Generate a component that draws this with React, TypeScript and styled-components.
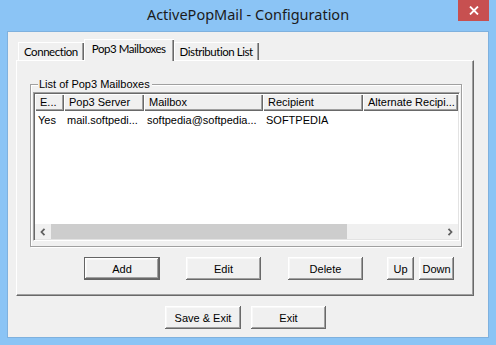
import React from 'react';
import styled, { createGlobalStyle } from 'styled-components';

const Global = createGlobalStyle`
  html, body { margin: 0; padding: 0; background: #8bc4f5; }
  body { width: 496px; height: 345px; overflow: hidden; }
`;

const Frame = styled.div`
  width: 496px;
  height: 345px;
  box-sizing: border-box;
  background: #8bc4f5;
  display: flex;
  flex-direction: column;
`;

const TitleBar = styled.div`
  height: 31px;
  flex: none;
  display: grid;
  grid-template-columns: 1fr auto 1fr;
  align-items: start;
`;

const Title = styled.div`
  grid-column: 2;
  font-family: "Noto Sans", sans-serif;
  font-size: 14.5px;
  line-height: 29px;
  color: #1b1b1b;
  white-space: nowrap;
`;

const CloseBtn = styled.div`
  grid-column: 3;
  justify-self: end;
  margin-right: 7px;
  width: 31px;
  height: 21px;
  background: #c75050;
  display: flex;
  align-items: center;
  justify-content: center;
`;

const Client = styled.div`
  margin: 0 7px;
  height: 307px;
  box-sizing: border-box;
  border: 1px solid #7fb1de;
  background: #f0f0f0;
  padding: 7px 13px 0 8px;
  display: flex;
  flex-direction: column;
  font-family: "Liberation Sans", Arial, sans-serif;
  font-size: 11px;
  color: #000;
`;

const TabStrip = styled.div`
  height: 21px;
  display: flex;
  align-items: flex-end;
  padding-left: 2px;
  position: relative;
  z-index: 1;
`;

const Tab = styled.div<{ $active?: boolean }>`
  flex: none;
  height: ${p => (p.$active ? 22 : 18)}px;
  margin-bottom: ${p => (p.$active ? -1 : 0)}px;
  box-sizing: border-box;
  background: #f0f0f0;
  border-top: 1px solid #fff;
  border-left: 1px solid #fff;
  box-shadow: inset -1px 0 #696969, inset -2px 0 #a0a0a0;
  font-family: Lato, sans-serif;
  font-size: 11.5px;
  letter-spacing: -0.45px;
  line-height: 17px;
  padding: ${p => (p.$active ? '0 8px 0 7px' : '0 6px 0 5px')};
  white-space: nowrap;
  color: #000;
`;

const Panel = styled.div`
  width: 458px;
  height: 236px;
  box-sizing: border-box;
  border-top: 1px solid #fff;
  border-left: 1px solid #fff;
  border-right: 1px solid #696969;
  border-bottom: 1px solid #696969;
  box-shadow: inset -1px -1px #a0a0a0;
  display: flex;
  flex-direction: column;
`;

const Group = styled.div`
  position: relative;
  margin: 23px 0 0 13px;
  width: 432px;
  height: 163px;
  box-sizing: border-box;
  border: 1px solid #a0a0a0;
  box-shadow: inset 1px 1px #fff, 1px 1px #fff;
  padding: 7px 0 0 2px;
`;

const Legend = styled.span`
  position: absolute;
  top: -7px;
  left: 7px;
  padding: 0 2px 0 1px;
  background: #f0f0f0;
  line-height: 13px;
`;

const ListView = styled.div`
  width: 427px;
  height: 149px;
  box-sizing: border-box;
  border-top: 1px solid #a0a0a0;
  border-left: 1px solid #a0a0a0;
  border-right: 1px solid #fff;
  border-bottom: 1px solid #fff;
  box-shadow: inset 1px 1px #696969, inset -1px -1px #e3e3e3;
  padding: 1px;
  background: #fff;
  display: flex;
  flex-direction: column;
  overflow: hidden;
`;

const HeaderRow = styled.div`
  display: flex;
  height: 17px;
  flex: none;
  background: #f0f0f0;
  overflow: hidden;
`;

const HeaderCell = styled.div<{ $w: number }>`
  width: ${p => p.$w}px;
  flex: none;
  box-sizing: border-box;
  padding-left: 5px;
  line-height: 16px;
  white-space: nowrap;
  overflow: hidden;
  box-shadow: inset 1px 1px #fff, inset -1px -1px #696969, inset -2px -2px #a0a0a0;
`;

const Body = styled.div`
  flex: 1;
  background: #fff;
`;

const Row = styled.div`
  display: flex;
  height: 16px;
  margin-top: 1px;
`;

const Cell = styled.div<{ $w: number }>`
  width: ${p => p.$w}px;
  flex: none;
  box-sizing: border-box;
  padding-left: 3px;
  line-height: 16px;
  white-space: nowrap;
  overflow: hidden;
`;

const HScroll = styled.div`
  height: 15px;
  flex: none;
  display: flex;
  background: #f0f0f0;
`;

const ScrollBtn = styled.div`
  width: 16px;
  flex: none;
  display: flex;
  align-items: center;
  justify-content: center;
`;

const Thumb = styled.div`
  width: 296px;
  flex: none;
  background: #cdcdcd;
`;

const Track = styled.div`
  flex: 1;
`;

const ButtonRow = styled.div<{ $top: number; $left: number }>`
  display: flex;
  margin-top: ${p => p.$top}px;
  padding-left: ${p => p.$left}px;
`;

const Btn = styled.div<{ $w: number; $ml?: number; $default?: boolean }>`
  width: ${p => p.$w}px;
  height: 23px;
  margin-left: ${p => p.$ml ?? 0}px;
  box-sizing: border-box;
  flex: none;
  background: #f0f0f0;
  display: flex;
  align-items: center;
  justify-content: center;
  border: ${p => (p.$default ? '1px solid #646464' : '0')};
  box-shadow: inset -1px -1px #696969, inset 1px 1px #fff, inset -2px -2px #a0a0a0, inset 2px 2px #f8f8f8;
  white-space: nowrap;
`;

const Chevron = ({ dir }: { dir: 'left' | 'right' }) => (
  <svg width="6" height="8" viewBox="0 0 6 8">
    <path
      d={dir === 'left' ? 'M4.5 0.8 L1.5 4 L4.5 7.2' : 'M1.5 0.8 L4.5 4 L1.5 7.2'}
      fill="none"
      stroke="#606060"
      strokeWidth="1.8"
    />
  </svg>
);

const cols = [29, 80, 119, 100, 95];
const headers = ['E...', 'Pop3 Server', 'Mailbox', 'Recipient', 'Alternate Recipi...'];
const row = ['Yes', 'mail.softpedi...', 'softpedia@softpedia...', 'SOFTPEDIA', ''];

export default function App() {
  return (
    <>
      <Global />
      <Frame>
        <TitleBar>
          <Title>ActivePopMail - Configuration</Title>
          <CloseBtn>
            <svg width="10" height="9" viewBox="0 0 10 9">
              <path d="M1 0.5 L9 8.5 M9 0.5 L1 8.5" stroke="#fff" strokeWidth="1.8" />
            </svg>
          </CloseBtn>
        </TitleBar>
        <Client>
          <TabStrip>
            <Tab>Connection</Tab>
            <Tab $active>Pop3 Mailboxes</Tab>
            <Tab>Distribution List</Tab>
          </TabStrip>
          <Panel>
            <Group>
              <Legend>List of Pop3 Mailboxes</Legend>
              <ListView>
                <HeaderRow>
                  {headers.map((h, i) => (
                    <HeaderCell key={i} $w={cols[i]}>{h}</HeaderCell>
                  ))}
                </HeaderRow>
                <Body>
                  <Row>
                    {row.map((c, i) => (
                      <Cell key={i} $w={cols[i]}>{c}</Cell>
                    ))}
                  </Row>
                </Body>
                <HScroll>
                  <ScrollBtn><Chevron dir="left" /></ScrollBtn>
                  <Thumb />
                  <Track />
                  <ScrollBtn><Chevron dir="right" /></ScrollBtn>
                </HScroll>
              </ListView>
            </Group>
            <ButtonRow $top={10} $left={67}>
              <Btn $w={76} $default>Add</Btn>
              <Btn $w={75} $ml={26}>Edit</Btn>
              <Btn $w={75} $ml={27}>Delete</Btn>
              <Btn $w={27} $ml={24}>Up</Btn>
              <Btn $w={35} $ml={5}>Down</Btn>
            </ButtonRow>
          </Panel>
          <ButtonRow $top={10} $left={149}>
            <Btn $w={76}>Save &amp; Exit</Btn>
            <Btn $w={75} $ml={10}>Exit</Btn>
          </ButtonRow>
        </Client>
      </Frame>
    </>
  );
}
